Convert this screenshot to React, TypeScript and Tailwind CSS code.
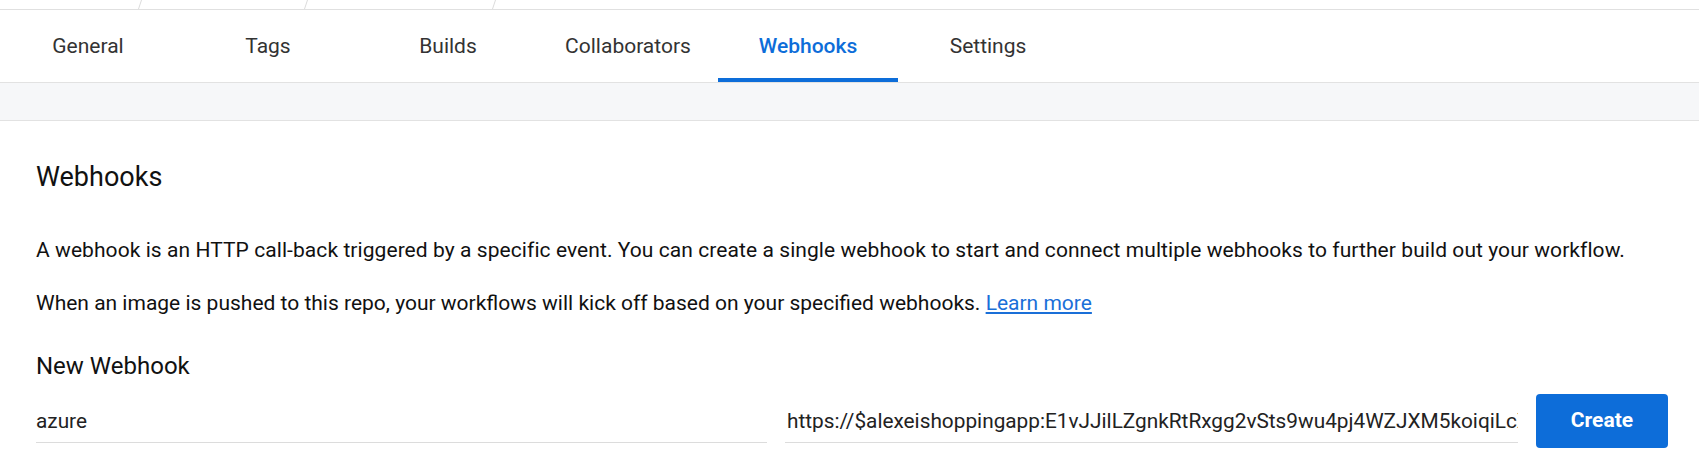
import { useState } from "react"

const tabs = ["General", "Tags", "Builds", "Collaborators", "Webhooks", "Settings"]

const crumbs = [142, 166, 188]

function Slash() {
  return (
    <svg width="4" height="9" viewBox="0 0 4 9" className="shrink-0">
      <line x1="3.5" y1="0" x2="0.5" y2="9" stroke="#dcdcdc" strokeWidth="1" />
    </svg>
  )
}

export default function App() {
  const [active, setActive] = useState("Webhooks")
  const [name, setName] = useState("azure")
  const [url, setUrl] = useState(
    "https://$alexeishoppingapp:E1vJJilLZgnkRtRxgg2vSts9wu4pj4WZJXM5koiqiLcXq8t0bn1pXc9b@alexeishoppingapp.scm.azurewebsites.net/api/registry/webhook"
  )

  return (
    <div className="w-[1699px] h-[463px] overflow-hidden bg-white font-['Roboto',sans-serif] text-[#111]">
      {/* cut-off breadcrumb strip */}
      <div className="flex h-[10px] border-b border-[#e0e0e0]">
        {crumbs.map((w, i) => (
          <div key={i} className="flex justify-end" style={{ width: w }}>
            <Slash />
          </div>
        ))}
      </div>

      {/* tabs */}
      <div className="flex h-[73px] border-b border-[#e2e2e2] -ml-[2px]">
        {tabs.map((t) => (
          <button
            key={t}
            onClick={() => setActive(t)}
            className={`relative w-[180px] h-full flex items-center justify-center text-[21px] ${
              active === t ? "text-[#0d6dd9] font-medium" : "text-[#333]"
            }`}
          >
            <span className="mt-[1px]">{t}</span>
            {active === t && (
              <span className="absolute left-0 right-0 bottom-0 h-[4px] bg-[#0d6dd9]" />
            )}
          </button>
        ))}
      </div>

      {/* gray band */}
      <div className="h-[38px] bg-[#f6f7f9] border-b border-[#e2e2e2]" />

      <div className="pl-[36px] pr-[31px]">
        <h2 className="mt-[40px] text-[27px] leading-[32px] font-normal">Webhooks</h2>

        <p className="mt-[43px] text-[21px] leading-[28px] tracking-[0.07px] whitespace-nowrap">
          A webhook is an HTTP call-back triggered by a specific event. You can create a single webhook to start and
          connect multiple webhooks to further build out your workflow.
        </p>
        <p className="mt-[25px] text-[21px] leading-[28px]">
          When an image is pushed to this repo, your workflows will kick off based on your specified webhooks.{" "}
          <a href="#" className="text-[#1a6fd8] underline underline-offset-2">
            Learn more
          </a>
        </p>

        <h3 className="mt-[34px] text-[24px] leading-[30px] font-normal">New Webhook</h3>

        <div className="mt-[13px] flex items-center gap-[18px]">
          <input
            value={name}
            onChange={(e) => setName(e.target.value)}
            className="flex-1 min-w-0 h-[44px] pt-[1px] text-[20.8px] text-[#222] border-b border-[#dcdcdc] outline-none bg-transparent"
          />
          <input
            value={url}
            onChange={(e) => setUrl(e.target.value)}
            className="flex-1 min-w-0 h-[44px] pl-[2px] pt-[1px] text-[20.8px] text-[#222] border-b border-[#dcdcdc] outline-none bg-transparent"
          />
          <button className="w-[132px] h-[54px] shrink-0 rounded-[4px] bg-[#0d6dd9] text-white text-[21px] font-bold">
            Create
          </button>
        </div>
      </div>
    </div>
  )
}
